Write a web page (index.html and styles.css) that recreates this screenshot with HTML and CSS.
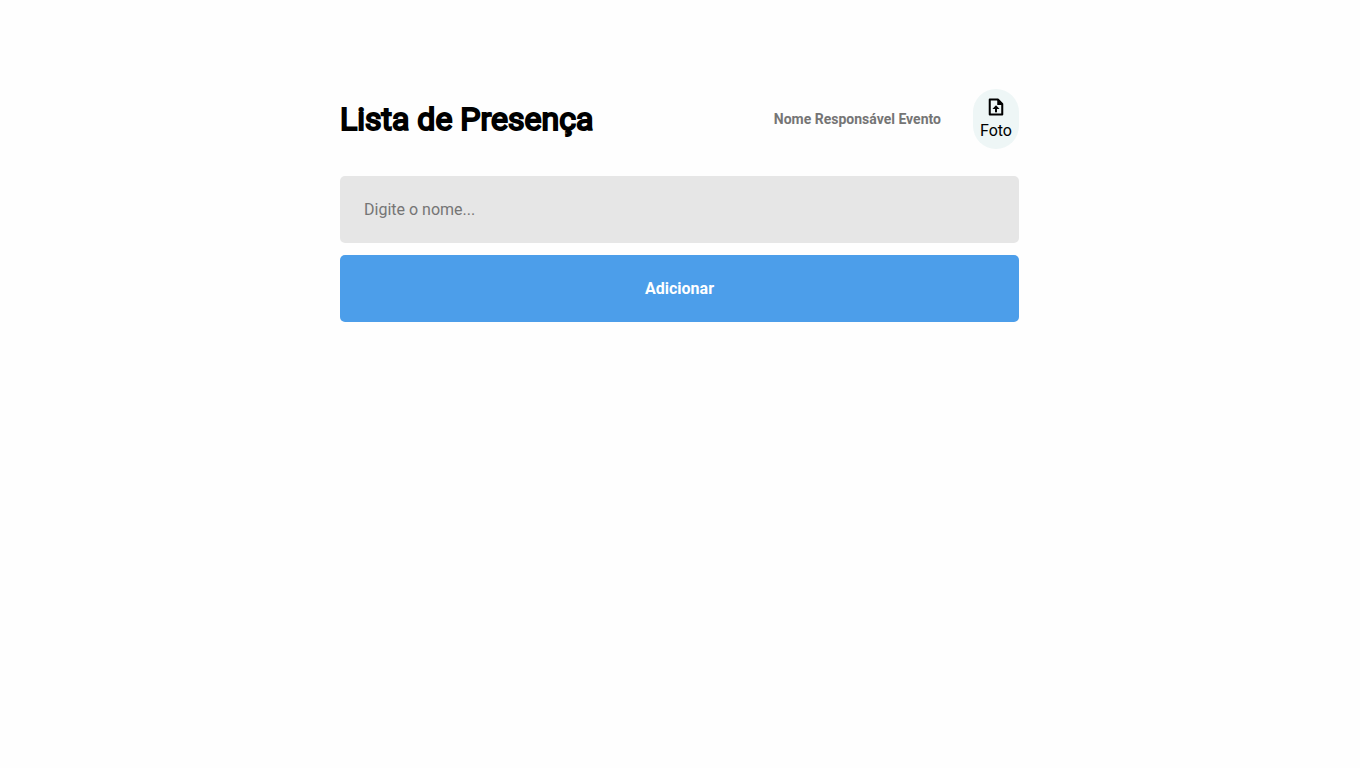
FILE: index.html
```html
<!DOCTYPE html>
<html lang="pt-BR">
<head>
    <meta charset="UTF-8">
    <meta name="viewport" content="width=device-width, initial-scale=1.0">
    <title>Lista de Presença</title>
    <link rel="stylesheet" href="styles.css">
</head>
<body>
    <main class="container">
        <header class="header">
            <h1>Lista de Presença</h1>
            <div class="responsible">
                <strong>Nome Responsável Evento</strong>
                <button type="button" class="photo-button">
                    <svg xmlns="http://www.w3.org/2000/svg" width="20" height="20" fill="none" stroke="currentColor" stroke-width="26" viewBox="0 0 256 256" aria-hidden="true">
                        <path stroke-linejoin="round" d="M208 224H48V32h104l56 56Z"/>
                        <path fill="currentColor" stroke="none" d="M144 32h14l58 58v12h-72Z"/>
                        <path d="M128 196v-60"/>
                        <path fill="currentColor" stroke="none" d="M128 104l46 50H82Z"/>
                    </svg>
                    <span>Foto</span>
                </button>
            </div>
        </header>

        <input type="text" class="name-input" placeholder="Digite o nome..." aria-label="Digite o nome">
        <button type="button" class="add-button">Adicionar</button>
    </main>
</body>
</html>
```
FILE: styles.css
```css
* {
    margin: 0;
    padding: 0;
    box-sizing: border-box;
}

body {
    background-color: #fefefe;
    font-family: Roboto, sans-serif;
    color: #000;
}

.container {
    width: 50%;
    margin: 0 auto;
    padding-top: 89px;
    padding-right: 1px;
    display: flex;
    flex-direction: column;
    gap: 12px;
}

.header {
    display: flex;
    justify-content: space-between;
    align-items: center;
    margin-bottom: 15px;
}

.header h1 {
    font-size: 32px;
    font-weight: 400;
    -webkit-text-stroke: 2px #000;
}

.responsible {
    display: flex;
    align-items: center;
    gap: 32px;
}

.responsible strong {
    font-size: 14px;
    color: #757575;
}

.photo-button {
    display: flex;
    flex-direction: column;
    align-items: center;
    justify-content: center;
    gap: 4px;
    height: 60px;
    padding: 0 7px 2px;
    border: none;
    border-radius: 24px;
    background-color: #eef6f6;
    color: #000;
    font-family: inherit;
    font-size: 16px;
    cursor: pointer;
}

.name-input,
.add-button {
    width: 100%;
    padding: 24px;
    border: none;
    border-radius: 5px;
    font-family: inherit;
    font-size: 16px;
    line-height: 19px;
}

.name-input {
    background-color: #e6e6e6;
}

.name-input::placeholder {
    color: #757575;
}

.add-button {
    background-color: #4c9eea;
    color: #fff;
    font-weight: bold;
    cursor: pointer;
}

.add-button:hover {
    opacity: 0.9;
}
```
